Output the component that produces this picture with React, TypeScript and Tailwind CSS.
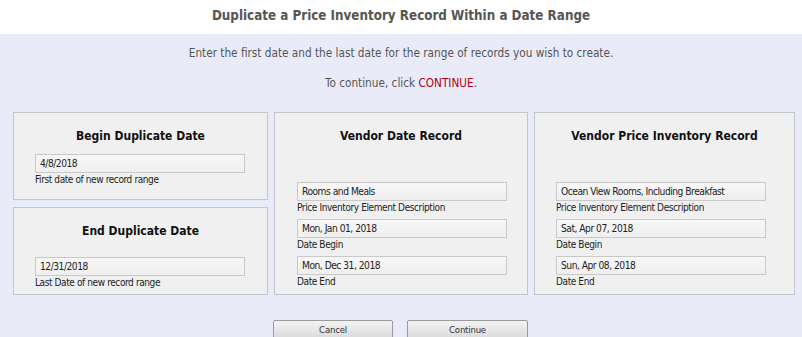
const font = "font-['DejaVu_Sans_Condensed','DejaVu_Sans',sans-serif]";

function Field({ value, label, className = '' }: { value: string; label: string; className?: string }) {
    return (
        <div className={className}>
            <div className="h-[19px] w-[210px] overflow-hidden whitespace-nowrap border border-[#c9c9c9] bg-gradient-to-b from-[#f7f7f7] to-[#efefef] pl-[4px] text-[10.2px] leading-[17px] tracking-[-0.5px] text-[#222]">
                {value}
            </div>
            <div className="h-[13px] whitespace-nowrap text-[10px] leading-[14px] tracking-[-0.4px] text-[#222]">{label}</div>
        </div>
    );
}

function Panel({ title, className = '', children }: { title: string; className?: string; children: React.ReactNode }) {
    return (
        <div className={`border border-[#c3c6ce] bg-[#f0f0f0] ${className}`}>
            <h2 className="mt-[15px] text-center text-[12px] font-bold leading-[16px] text-[#111]">{title}</h2>
            {children}
        </div>
    );
}

export default function App() {
    return (
        <div className={`${font} h-[337px] w-[802px] overflow-hidden bg-[#e9ecf8]`}>
            <div className="flex h-[34px] items-center justify-center bg-white pb-[2px]">
                <h1 className="text-[13.3px] font-bold text-[#555]">Duplicate a Price Inventory Record Within a Date Range</h1>
            </div>
            <div className="pt-[11px] text-center text-[11.7px] leading-[16px] text-[#555]">
                <p>Enter the first date and the last date for the range of records you wish to create.</p>
                <p className="mt-[14px]">
                    To continue, click <span className="text-[#b00010]">CONTINUE</span>.
                </p>
            </div>

            <div className="ml-[13px] mt-[21px] flex gap-[6px]">
                <div className="flex w-[255px] flex-col gap-[7px]">
                    <Panel title="Begin Duplicate Date" className="h-[88px]">
                        <Field className="ml-[21px] mt-[10px]" value="4/8/2018" label="First date of new record range" />
                    </Panel>
                    <Panel title="End Duplicate Date" className="h-[88px]">
                        <Field className="ml-[21px] mt-[18px]" value="12/31/2018" label="Last Date of new record range" />
                    </Panel>
                </div>
                <Panel title="Vendor Date Record" className="h-[183px] w-[254px]">
                    <div className="ml-[22px] mt-[38px] flex flex-col gap-[5px]">
                        <Field value="Rooms and Meals" label="Price Inventory Element Description" />
                        <Field value="Mon, Jan 01, 2018" label="Date Begin" />
                        <Field value="Mon, Dec 31, 2018" label="Date End" />
                    </div>
                </Panel>
                <Panel title="Vendor Price Inventory Record" className="h-[183px] w-[261px]">
                    <div className="ml-[21px] mt-[38px] flex flex-col gap-[5px]">
                        <Field value="Ocean View Rooms, Including Breakfast" label="Price Inventory Element Description" />
                        <Field value="Sat, Apr 07, 2018" label="Date Begin" />
                        <Field value="Sun, Apr 08, 2018" label="Date End" />
                    </div>
                </Panel>
            </div>

            <div className="ml-[273px] mt-[25px] flex gap-[14px]">
                <button className="h-[20px] w-[120px] rounded-[2px] border border-[#9a9a9a] bg-gradient-to-b from-[#f4f4f4] to-[#d9d9d9] text-[9.5px] tracking-[-0.2px] text-[#333]">
                    Cancel
                </button>
                <button className="h-[20px] w-[121px] rounded-[2px] border border-[#9a9a9a] bg-gradient-to-b from-[#f4f4f4] to-[#d9d9d9] text-[9.5px] tracking-[-0.2px] text-[#333]">
                    Continue
                </button>
            </div>
        </div>
    );
}
